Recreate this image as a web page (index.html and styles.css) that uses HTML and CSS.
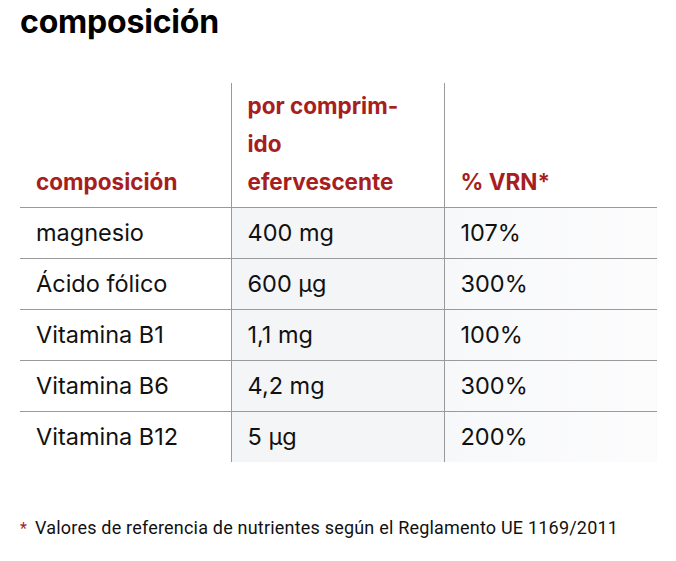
FILE: index.html
```html
<!DOCTYPE html>
<html lang="es">
<head>
<meta charset="utf-8">
<link rel="stylesheet" href="styles.css">
</head>
<body>
<main class="page">
  <h2 class="title">composición</h2>
  <table class="comp">
    <colgroup>
      <col class="w1"><col class="w2"><col class="w3">
    </colgroup>
    <thead>
      <tr>
        <th class="c1">composición</th>
        <th class="c2">por comprim-<br>ido<br>efervescente</th>
        <th class="c3">% VRN*</th>
      </tr>
    </thead>
    <tbody>
      <tr><td class="c1">magnesio</td><td class="c2">400 mg</td><td class="c3">107%</td></tr>
      <tr><td class="c1">Ácido fólico</td><td class="c2">600 µg</td><td class="c3">300%</td></tr>
      <tr><td class="c1">Vitamina B1</td><td class="c2">1,1 mg</td><td class="c3">100%</td></tr>
      <tr><td class="c1">Vitamina B6</td><td class="c2">4,2 mg</td><td class="c3">300%</td></tr>
      <tr><td class="c1">Vitamina B12</td><td class="c2">5 µg</td><td class="c3">200%</td></tr>
    </tbody>
  </table>
  <p class="note"><span class="star">*</span><span class="note-text">Valores de referencia de nutrientes según el Reglamento UE 1169/2011</span></p>
</main>
</body>
</html>
```
FILE: styles.css
```css
html, body { margin: 0; padding: 0; background: #fff; }
body { font-family: Inter, "Noto Sans", sans-serif; color: #111; }
.page { padding: 0 19px 0 20px; }
.title {
  margin: 0;
  font-size: 32px;
  line-height: 40px;
  font-weight: 700;
  letter-spacing: -0.2px;
  padding-top: 2px;
  color: #000;
}
.comp {
  margin-top: 41px;
  width: 637px;
  border-collapse: collapse;
  table-layout: fixed;
}
.comp .w1 { width: 211px; }
.comp .w2 { width: 213px; }
.comp .w3 { width: 213px; }
.comp .c2, .comp .c3 { border-left: 1px solid #9a9a9a; }
.comp th {
  text-align: left;
  vertical-align: bottom;
  color: #a61e1e;
  font-weight: 700;
  font-size: 22.5px;
  line-height: 38px;
  padding: 3px 16px 6px;
  height: 115px;
}
.comp td {
  font-size: 23.5px;
  height: 50px;
  padding: 0 16px;
  vertical-align: middle;
  border-top: 1px solid #9a9a9a;
  line-height: 28px;
  color: #111;
}
.comp td.c2 { background: #f4f5f7; }
.comp td.c3 { background: linear-gradient(90deg, #f7f8fa, #fcfcfd); }
.note {
  margin: 54px 0 0;
  font-family: Roboto, "Liberation Sans", sans-serif;
  font-size: 18px;
  letter-spacing: 0.2px;
  line-height: 24px;
  color: #111;
  display: flex;
  align-items: baseline;
}
.star { color: #a61e1e; width: 15px; font-size: 16px; }
```
